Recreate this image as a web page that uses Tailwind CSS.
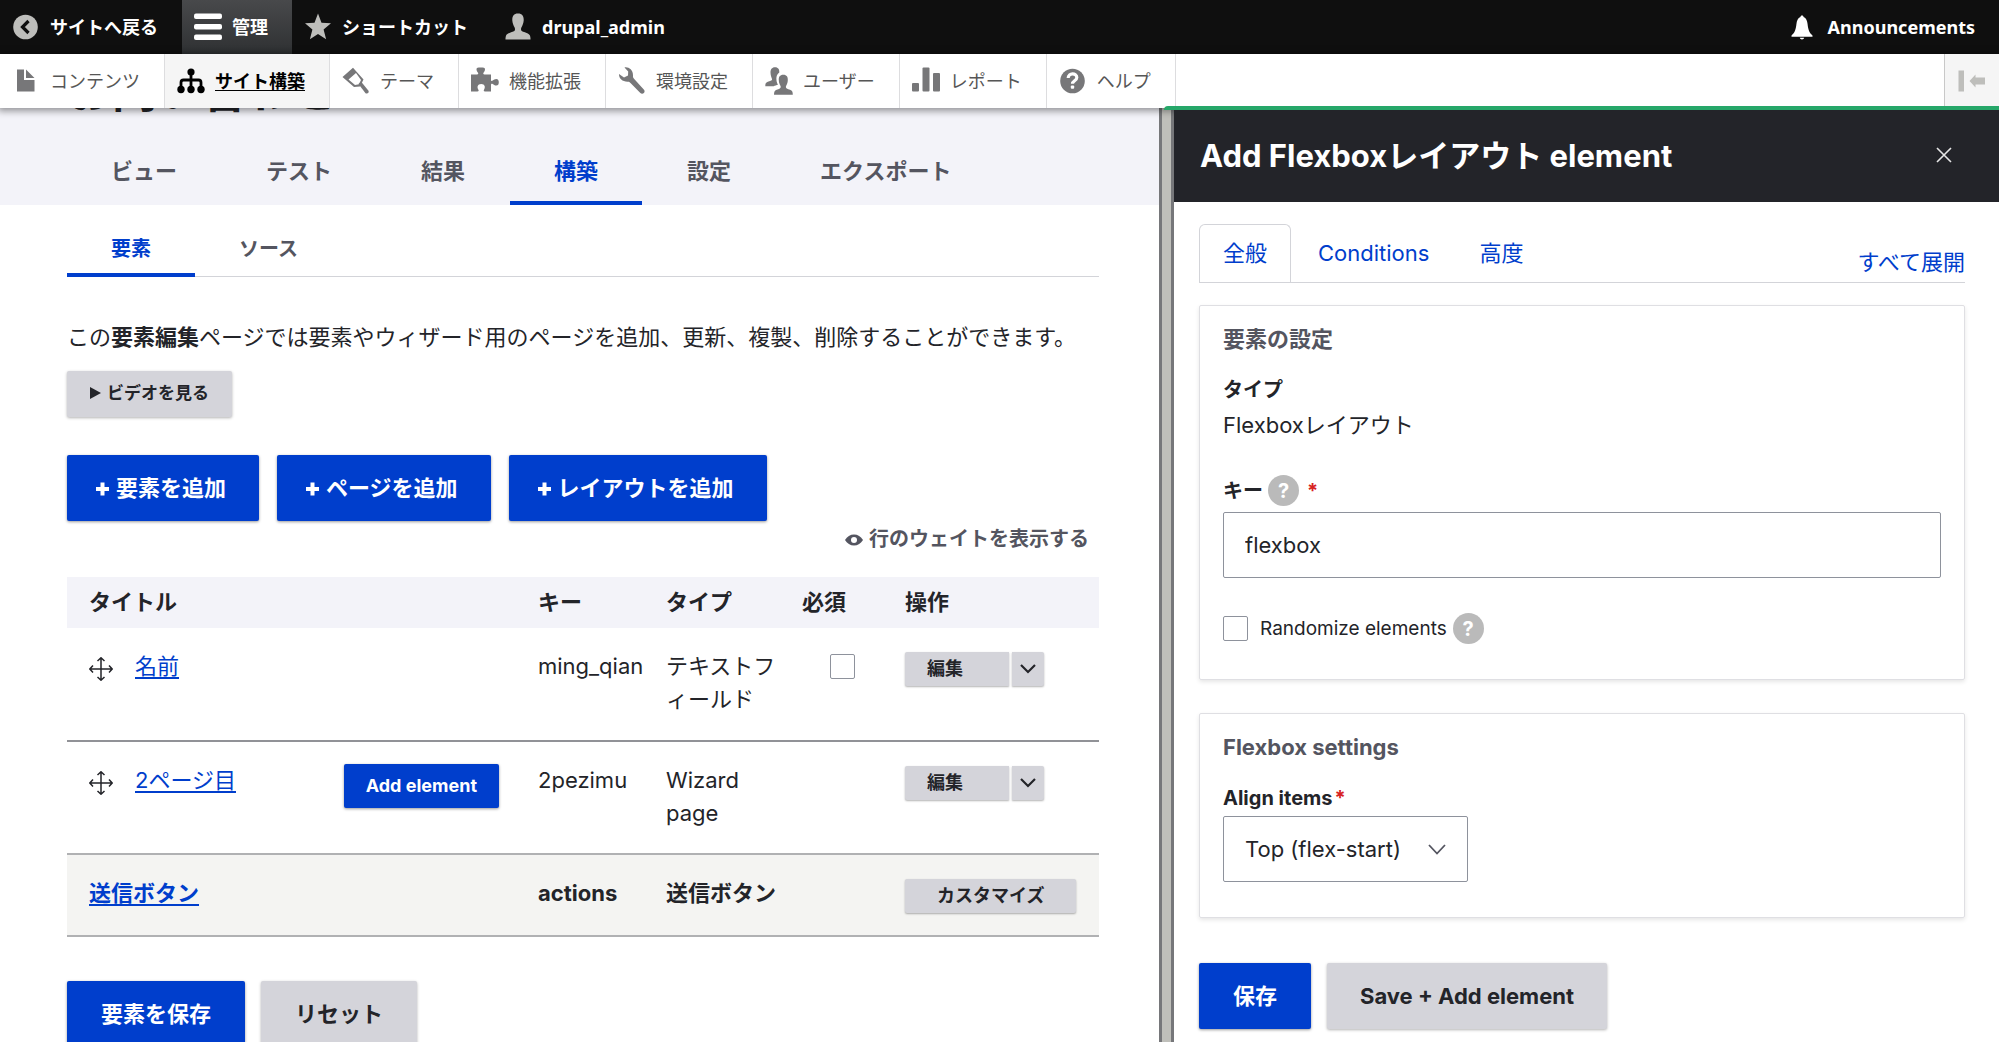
<!DOCTYPE html>
<html lang="ja">
<head>
<meta charset="utf-8">
<title>お問い合わせ</title>
<script src="https://cdn.jsdelivr.net/npm/@tailwindcss/browser@4"></script>
</head>
<body class="flex h-screen flex-col overflow-hidden bg-white font-['Inter','Noto_Sans_CJK_JP',sans-serif] text-[22px] leading-[33px] text-[#232429]">

<nav class="flex h-[54px] shrink-0 items-stretch bg-[#0f0f0f] font-['Noto_Sans','Noto_Sans_CJK_JP',sans-serif] text-lg font-bold text-white" aria-label="ツールバー">
  <a href="#" class="flex items-center gap-2.5 pl-3 pr-6">
    <svg class="size-7" viewBox="0 0 28 28"><circle cx="13.5" cy="14" r="12.3" fill="#bebebb"/><path d="M16.5 8l-6 6 6 6" fill="none" stroke="#0f0f0f" stroke-width="3.2"/></svg>サイトへ戻る</a>
  <a href="#" class="flex items-center gap-2.5 bg-linear-to-b from-[#48494b] to-[#2f3133] pl-3 pr-6">
    <svg class="size-7" viewBox="0 0 28 28" fill="#fff"><rect y="0.500" width="28" height="5.500" rx="2"/><rect y="11" width="28" height="5.500" rx="2"/><rect y="21.500" width="28" height="5.500" rx="2"/></svg>管理</a>
  <a href="#" class="flex items-center gap-2.5 pl-3 pr-6">
    <svg class="size-7" viewBox="0 0 28 28" fill="#bebebb"><path d="M14 0.500l3.500 9.300 9.500.5-7.400 6.200 2.500 9.800L14 21l-8.100 5.300 2.500-9.800L1 10.300l9.500-.5z"/></svg>ショートカット</a>
  <a href="#" class="flex items-center gap-2.5 pl-3 pr-6">
    <svg class="size-7" viewBox="0 0 28 28" fill="#bebebb"><path d="M14 0.500c4.500 0 5.900 3 5.700 7-.2 3-1.300 5-2.200 6.800-.8 1.500-.7 3.200.6 3.900 2.300 1.300 7.300 1.700 8 4.700.3 1.300.5 2.500.4 3.600h-25c-.1-1.100.1-2.300.4-3.600.7-3 5.700-3.400 8-4.700 1.300-.7 1.400-2.400.6-3.900-.9-1.800-2-3.800-2.200-6.800-.2-4 1.200-7 5.700-7z"/></svg>drupal_admin</a>
  <a href="#" class="ml-auto flex items-center gap-3 pl-3 pr-6">
    <svg class="size-7" viewBox="0 0 28 28" fill="#fff"><path d="M14 2.500c1 0 1.500.7 1.600 1.500 2.600 1.100 3.600 3.700 4 7.300.5 4.600 1.400 8.400 4.900 11.200v1.300h-21v-1.300c3.500-2.800 4.400-6.600 4.900-11.200.4-3.600 1.400-6.200 4-7.300.1-.8.600-1.500 1.600-1.500zM11.800 24.800h4.400c-.3 1-1.100 1.600-2.200 1.600s-1.900-.6-2.200-1.600z"/></svg>Announcements</a>
</nav>

<nav class="relative z-10 flex h-[54px] shrink-0 items-stretch bg-white font-['Noto_Sans','Noto_Sans_CJK_JP',sans-serif] text-lg text-[#565656] shadow-[0_1px_7px_2px_rgba(0,0,0,0.4)]" aria-label="管理メニュー">
  <a href="#" class="flex items-center gap-2.5 border-r border-[#dddddf] pl-3 pr-6">
    <svg class="size-7" viewBox="0 0 28 28" fill="#777779"><path d="M5 2.500h7V13H22.500v11.500H5zM14 2.500l8.500 8.500H14z"/></svg>コンテンツ</a>
  <a href="#" class="flex items-center gap-2.5 border-r border-[#dddddf] bg-[#f5f5f5] pl-3 pr-6 font-bold text-black">
    <svg class="size-7" viewBox="0 0 28 28"><g fill="none" stroke="#000" stroke-width="2.800"><path d="M14 5v17M4 21v-5.500q0-2.500 2.500-2.500h15q2.500 0 2.500 2.500V21"/></g><circle cx="14" cy="5" r="3.600"/><circle cx="4" cy="22.500" r="3.700"/><circle cx="14" cy="22.500" r="3.700"/><circle cx="24" cy="22.500" r="3.700"/></svg><span class="underline underline-offset-2">サイト構築</span></a>
  <a href="#" class="flex items-center gap-2.5 border-r border-[#dddddf] pl-3 pr-6">
    <svg class="size-7" viewBox="0 0 28 28" fill="#777779"><path fill-rule="evenodd" d="M11 .8L21.500 12.500 18 19.500l-6 .5L.5 10zM14 6L6.500 12.500 13 18l4-.8 2-4.200z"/><path d="M16.500 17l2.500-2.500 7.500 9.300c.8 2-1 3.500-3 2.500z"/></svg>テーマ</a>
  <a href="#" class="flex items-center gap-2.5 border-r border-[#dddddf] pl-3 pr-6">
    <svg class="size-7" viewBox="0 0 28 28" fill="#777779"><path d="M0 7.500h6c1.200 0 1.500-.6 1-1.700C6.300 4.500 5.500 3.800 5.500 2.200 5.500.8 6.800.5 9.700.5s4.300.3 4.300 1.700c0 1.600-.8 2.300-1.500 3.600-.5 1.100-.2 1.700 1 1.700H20v5.200c0 1.200.7 1.600 1.700.9 1.100-.8 2-1.600 3.600-1.600 1.800 0 2.500 1.300 2.500 3.300s-.7 3.300-2.500 3.300c-1.600 0-2.500-.8-3.600-1.600-1-.7-1.700-.3-1.700.9v6.600h-6c-1.300 0-1.500-.8-1-1.700 1.600-2.500 1-5.800-2.800-5.800s-4.400 3.300-2.800 5.800c.5.900.3 1.700-1 1.700H0z"/></svg>機能拡張</a>
  <a href="#" class="flex items-center gap-2.5 border-r border-[#dddddf] pl-3 pr-6">
    <svg class="size-7" viewBox="0 0 28 28" fill="#777779"><path d="M6.500.5c4-.8 8.700 2.200 8.500 8-.1 1.500 0 2.200 1 3.200l10 11c2 2.700-1.500 5.500-3.900 3.100L12.500 16c-1-1-1.500-1.300-3-1.200C4.200 14.800.8 11.500 1 7l5 3.400 4-2 .2-3.900z"/></svg>環境設定</a>
  <a href="#" class="flex items-center gap-2.5 border-r border-[#dddddf] pl-3 pr-6">
    <svg class="size-7" viewBox="0 0 28 28" fill="#777779"><path d="M10 .2c3.400 0 4.500 2.300 4.300 5.200-2.500 1.600-3.300 4.700-2.800 8 .2 1.700.9 3.200 1.500 4.300-1.300.4-3.300.8-4.300 1.500H.3c0-2.500.4-3.800 2.500-4.500 2-.6 4.300-.9 4.300-2.200 0-1.200-1.600-3.400-1.600-6.800C5.500 2.500 6.700.2 10 .2z"/><path d="M18.300 7.800c3.500 0 4.700 2.300 4.500 5.500-.1 2.500-.8 4-1.500 5.300-.6 1.200-.6 2.300.4 2.800 2 1 5 1.200 5.700 3.400.3 1.100.4 2 .4 3H9c0-1 .1-1.900.4-3 .7-2.200 3.500-2.400 5.500-3.400 1-.5 1-1.600.4-2.800-.7-1.300-1.400-2.800-1.500-5.300-.2-3.200 1-5.500 4.500-5.500z"/></svg>ユーザー</a>
  <a href="#" class="flex items-center gap-2.5 border-r border-[#dddddf] pl-3 pr-6">
    <svg class="size-7" viewBox="0 0 28 28" fill="#777779"><rect x="0" y="16" width="7" height="8.500" rx="1"/><rect x="10.500" y="0.500" width="7" height="24" rx="1"/><rect x="21" y="6" width="7" height="18.500" rx="1"/></svg>レポート</a>
  <a href="#" class="flex items-center gap-2.5 border-r border-[#dddddf] pl-3 pr-6">
    <svg class="size-7" viewBox="0 0 28 28"><circle cx="13.500" cy="14" r="12.300" fill="#777779"/><path d="M9.200 11c0-5.500 8.600-5.500 8.600-.5 0 3.200-4.300 3.200-4.300 6.200" fill="none" stroke="#fff" stroke-width="3.200"/><rect x="11.800" y="18.500" width="3.400" height="3.300" rx="1" fill="#fff"/></svg>ヘルプ</a>
  <button type="button" aria-label="垂直方向" class="ml-auto flex w-[55px] items-center justify-center border-l border-[#c8c8c8] bg-[#f5f5f5]">
    <svg class="size-7" viewBox="0 0 28 28" fill="#bebebb"><rect x="0.500" y="3.500" width="5.500" height="21"/><path d="M11.500 14l6-6.500v3H27v7h-9.500v3z"/></svg></button>
</nav>

<div class="grid min-h-0 grow grid-cols-[1159fr_15px_825fr]">

  <main class="overflow-hidden">
    <header class="bg-[#f3f3f9] pl-[67px]">
      <h1 class="-mt-[46px] h-[98px] text-[45px] font-bold leading-[60px]">お問い合わせ</h1>
      <nav class="-mt-[22px] flex h-[67px] gap-px font-bold text-[#545560]" aria-label="プライマリータブ">
        <a href="#" class="px-11 py-[17px]">ビュー</a>
        <a href="#" class="px-11 py-[17px]">テスト</a>
        <a href="#" class="px-11 py-[17px]">結果</a>
        <a href="#" class="border-b-4 border-[#003ecc] px-11 pt-[17px] text-[#003ecc]">構築</a>
        <a href="#" class="px-11 py-[17px]">設定</a>
        <a href="#" class="px-11 py-[17px]">エクスポート</a>
      </nav>
    </header>

    <div class="pl-[67px] pr-[60px]">
      <nav class="mt-[17px] flex h-[55px] border-b border-[#d3d4d9] text-xl leading-[33px] font-bold text-[#545560]" aria-label="セカンダリータブ">
        <a href="#" class="h-[55px] border-b-4 border-[#003ecc] px-11 pt-[11px] text-[#003ecc]">要素</a>
        <a href="#" class="px-11 pt-[11px]">ソース</a>
      </nav>

      <p class="mt-11 whitespace-nowrap">この<strong>要素編集</strong>ページでは要素やウィザード用のページを追加、更新、複製、削除することができます。</p>
      <button type="button" class="mt-[17px] flex h-[46px] items-center gap-1.5 rounded-xs bg-[#d4d4da] px-[23px] pb-0.5 text-[17px] font-bold shadow-[0_1px_3px_rgba(0,0,0,0.3)]">
        <svg class="h-3 w-[11px]" viewBox="0 0 11 12" fill="#232429"><path d="M0 0l11 6-11 6z"/></svg>ビデオを見る</button>

      <div class="mt-[38px] flex gap-[18px] font-bold text-white">
        <button type="button" class="flex h-[66px] items-center gap-1.5 rounded-xs bg-[#003ecc] pl-7 pr-[33px] shadow-[0_1px_3px_rgba(0,0,0,0.4)]"><svg class="size-[15px]" viewBox="0 0 15 15" fill="#fff"><path d="M5.500 1.500h4v4.500h4.500v4H9.500v4.500h-4V10H1V6h4.500z"/></svg>要素を追加</button>
        <button type="button" class="flex h-[66px] items-center gap-1.5 rounded-xs bg-[#003ecc] pl-7 pr-[33px] shadow-[0_1px_3px_rgba(0,0,0,0.4)]"><svg class="size-[15px]" viewBox="0 0 15 15" fill="#fff"><path d="M5.500 1.500h4v4.500h4.500v4H9.500v4.500h-4V10H1V6h4.500z"/></svg>ページを追加</button>
        <button type="button" class="flex h-[66px] items-center gap-1.5 rounded-xs bg-[#003ecc] pl-7 pr-[33px] shadow-[0_1px_3px_rgba(0,0,0,0.4)]"><svg class="size-[15px]" viewBox="0 0 15 15" fill="#fff"><path d="M5.500 1.500h4v4.500h4.500v4H9.500v4.500h-4V10H1V6h4.500z"/></svg>レイアウトを追加</button>
      </div>

      <div class="mt-0.5 flex justify-end pr-2.5">
        <button type="button" class="flex items-center gap-1.5 text-xl leading-[33px] font-bold text-[#545560]">
          <svg class="h-3 w-[18px]" viewBox="0 0 18 12"><path d="M0 6c2-3.500 5.300-5.500 9-5.500s7 2 9 5.500c-2 3.500-5.300 5.500-9 5.500S2 9.500 0 6z" fill="#545560"/><circle cx="9" cy="6" r="3" fill="#fff"/></svg>行のウェイトを表示する</button>
      </div>

      <table class="mt-[21px] w-full table-fixed border-collapse text-left align-top">
        <colgroup><col><col class="w-[128px]"><col class="w-[136px]"><col class="w-[103px]"><col class="w-[216px]"></colgroup>
        <thead>
          <tr class="h-[51px] bg-[#f3f3f9]">
            <th class="pl-[22px]">タイトル</th><th class="pl-[22px]">キー</th><th class="pl-[22px]">タイプ</th><th class="pl-[22px]">必須</th><th class="pl-[22px]">操作</th>
          </tr>
        </thead>
        <tbody class="align-top">
          <tr class="h-[113px] border-b-2 border-[#919297]">
            <td class="py-[22px] pl-[22px]"><div class="flex gap-[22px]">
              <svg class="mt-[7px] size-6" viewBox="0 0 24 24" fill="none" stroke="#232429" stroke-width="1.500"><path d="M12 1v22M1 12h22M8.500 4L12 .8 15.500 4M8.500 20l3.500 3.200 3.500-3.200M4 8.500L.8 12 4 15.500M20 8.500l3.200 3.500-3.200 3.500"/></svg>
              <a href="#" class="text-[#003ecc] underline underline-offset-3">名前</a></div></td>
            <td class="py-[22px] pl-[22px]">ming_qian</td>
            <td class="py-[22px] pl-[22px]">テキストフィールド</td>
            <td class="py-[26px] pl-[22px] text-center"><input type="checkbox" aria-label="必須" class="mx-auto block size-[25px] appearance-none rounded-xs border border-[#8e929c] bg-white"></td>
            <td class="py-[24px] pl-[22px]"><div class="flex gap-[3px] text-lg font-bold">
              <button type="button" class="h-[34px] w-[104px] rounded-l-xs bg-[#d4d4da] pl-[22px] text-left shadow-[0_1px_2px_rgba(0,0,0,0.3)]">編集</button>
              <button type="button" aria-label="その他の操作" class="flex h-[34px] w-8 items-center justify-center rounded-r-xs bg-[#d4d4da] shadow-[0_1px_2px_rgba(0,0,0,0.3)]"><svg class="h-[10px] w-4" viewBox="0 0 16 10" fill="none" stroke="#232429" stroke-width="2.200"><path d="M1 1l7 7 7-7"/></svg></button></div></td>
          </tr>
          <tr class="h-[113px] border-b-2 border-[#b0b1b3]">
            <td class="py-[22px] pl-[22px]"><div class="flex gap-[22px] pr-[17px]">
              <svg class="mt-[7px] size-6" viewBox="0 0 24 24" fill="none" stroke="#232429" stroke-width="1.500"><path d="M12 1v22M1 12h22M8.500 4L12 .8 15.500 4M8.500 20l3.500 3.200 3.500-3.200M4 8.500L.8 12 4 15.500M20 8.500l3.200 3.500-3.200 3.500"/></svg>
              <a href="#" class="text-[#003ecc] underline underline-offset-3">2ページ目</a>
              <button type="button" class="ml-auto h-11 rounded-xs bg-[#003ecc] px-[22px] text-lg font-bold text-white shadow-[0_1px_3px_rgba(0,0,0,0.4)]">Add element</button></div></td>
            <td class="py-[22px] pl-[22px]">2pezimu</td>
            <td class="py-[22px] pl-[22px]">Wizard page</td>
            <td></td>
            <td class="py-[24px] pl-[22px]"><div class="flex gap-[3px] text-lg font-bold">
              <button type="button" class="h-[34px] w-[104px] rounded-l-xs bg-[#d4d4da] pl-[22px] text-left shadow-[0_1px_2px_rgba(0,0,0,0.3)]">編集</button>
              <button type="button" aria-label="その他の操作" class="flex h-[34px] w-8 items-center justify-center rounded-r-xs bg-[#d4d4da] shadow-[0_1px_2px_rgba(0,0,0,0.3)]"><svg class="h-[10px] w-4" viewBox="0 0 16 10" fill="none" stroke="#232429" stroke-width="2.200"><path d="M1 1l7 7 7-7"/></svg></button></div></td>
          </tr>
          <tr class="h-[82px] border-b-2 border-[#b0b1b3] bg-[#f4f4f2] font-bold">
            <td class="py-[22px] pl-[22px]"><a href="#" class="text-[#003ecc] underline underline-offset-3">送信ボタン</a></td>
            <td class="py-[22px] pl-[22px]">actions</td>
            <td class="py-[22px] pl-[22px]">送信ボタン</td>
            <td></td>
            <td class="pt-6 pl-[22px]"><button type="button" class="block h-[34px] rounded-xs bg-[#d4d4da] px-8 text-lg font-bold shadow-[0_1px_2px_rgba(0,0,0,0.3)]">カスタマイズ</button></td>
          </tr>
        </tbody>
      </table>

      <div class="mt-[44px] flex gap-4 font-bold">
        <button type="button" class="h-[66px] rounded-xs bg-[#003ecc] px-[34px] text-white shadow-[0_1px_3px_rgba(0,0,0,0.4)]">要素を保存</button>
        <button type="button" class="h-[66px] rounded-xs bg-[#d4d4da] px-[34px] shadow-[0_1px_3px_rgba(0,0,0,0.3)]">リセット</button>
      </div>
    </div>
  </main>

  <div class="border-x-[3px] border-[#76777a] bg-[#bfbfba]"></div>

  <aside role="dialog" aria-labelledby="dialog-title" class="relative z-20 bg-white">
    <div class="absolute -top-[2px] right-0 -left-[10px] h-1 rounded-tl-md bg-[#26a769]"></div>
    <header class="flex h-[94px] items-center justify-between bg-[#232429] pr-[47px] pl-[26px] text-white">
      <h2 id="dialog-title" class="text-[31px] font-bold">Add Flexboxレイアウト element</h2>
      <button type="button" aria-label="閉じる"><svg class="size-4" viewBox="0 0 16 16" fill="none" stroke="#e6e6e6" stroke-width="1.600"><path d="M1 1l14 14M15 1L1 15"/></svg></button>
    </header>

    <div class="pr-[34px] pl-[25px]">
      <div class="mt-[22px] flex border-b border-[#d3d4d9] text-[#003ecc]">
        <div class="-mb-px flex gap-1" role="tablist">
          <a href="#" role="tab" aria-selected="true" class="h-[58px] rounded-t-md border border-b-0 border-[#d3d4d9] bg-white px-[23px] py-3">全般</a>
          <a href="#" role="tab" class="px-[23px] py-[13px]">Conditions</a>
          <a href="#" role="tab" class="px-[23px] py-[13px]">高度</a>
        </div>
        <a href="#" class="ml-auto self-end pb-[3px]">すべて展開</a>
      </div>

      <fieldset class="mt-[22px] flex h-[375px] flex-col rounded-xs border border-[#dfdfe3] px-[23px] pt-[17px] shadow-[0_2px_4px_rgba(0,0,0,0.1)]">
        <h3 class="font-bold text-[#545560]">要素の設定</h3>
        <h4 class="mt-[18px] text-xl leading-[33px] font-bold">タイプ</h4>
        <p class="mt-0.5">Flexboxレイアウト</p>
        <div class="mt-8 flex h-[33px] items-center text-xl font-bold">
          <label for="key">キー</label>
          <span class="ml-[5px] flex size-[31px] items-center justify-center rounded-full bg-[#bababa] text-white">?</span>
          <span class="ml-2 text-[#d72222]">*</span>
        </div>
        <input id="key" type="text" value="flexbox" class="mt-[5px] h-[66px] w-full shrink-0 rounded-xs border border-[#8e929c] px-[21px]">
        <div class="mt-[34px] flex h-[33px] items-center text-[19px]">
          <input id="random" type="checkbox" class="size-[25px] appearance-none rounded-xs border border-[#8e929c] bg-white">
          <label for="random" class="ml-3">Randomize elements</label>
          <span class="ml-1.5 flex size-[31px] items-center justify-center rounded-full bg-[#bababa] text-xl font-bold text-white">?</span>
        </div>
      </fieldset>

      <fieldset class="mt-[33px] flex h-[205px] flex-col items-start rounded-xs border border-[#dfdfe3] px-[23px] pt-[17px] shadow-[0_2px_4px_rgba(0,0,0,0.1)]">
        <h3 class="font-bold text-[#545560]">Flexbox settings</h3>
        <div class="mt-[18px] mb-px flex gap-0.5 text-xl leading-[33px] font-bold">
          <label for="align">Align items</label><span class="text-[#d72222]">*</span>
        </div>
        <div class="grid items-center">
          <select id="align" class="col-start-1 row-start-1 h-[66px] w-[245px] appearance-none rounded-xs border border-[#8e929c] bg-white px-[21px]"><option>Top (flex-start)</option></select>
          <svg class="pointer-events-none col-start-1 row-start-1 mr-[22px] h-[11px] w-[18px] justify-self-end" viewBox="0 0 18 11" fill="none" stroke="#545560" stroke-width="1.800"><path d="M1 1l8 8.500L17 1"/></svg>
        </div>
      </fieldset>

      <div class="mt-[45px] flex gap-4 font-bold">
        <button type="button" class="h-[66px] rounded-xs bg-[#003ecc] px-[34px] text-white shadow-[0_1px_3px_rgba(0,0,0,0.4)]">保存</button>
        <button type="button" class="h-[66px] rounded-xs bg-[#d4d4da] px-[33px] shadow-[0_1px_3px_rgba(0,0,0,0.3)]">Save + Add element</button>
      </div>
    </div>
  </aside>
</div>
</body>
</html>
